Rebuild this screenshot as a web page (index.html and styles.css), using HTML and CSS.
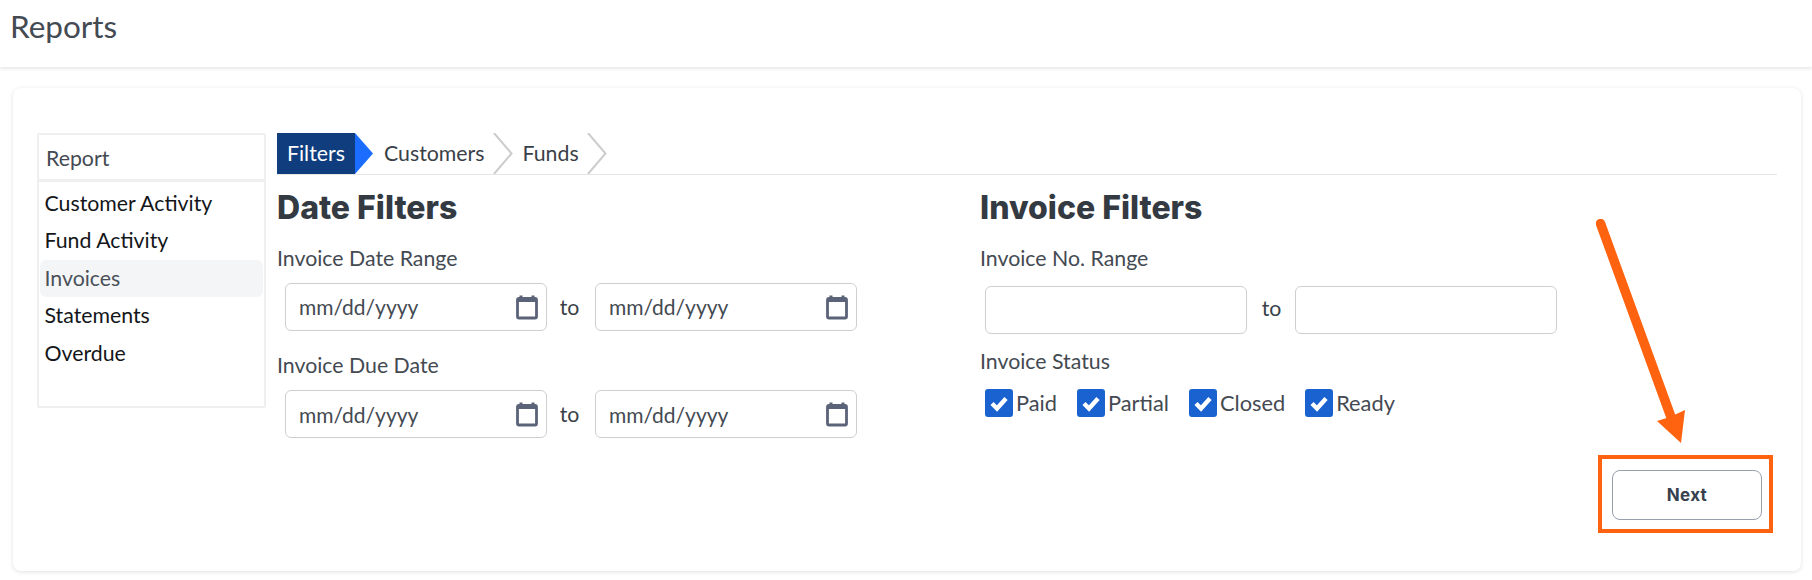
FILE: index.html
```html
<!DOCTYPE html>
<html lang="en">
<head>
<meta charset="utf-8">
<title>Reports</title>
<link rel="stylesheet" href="styles.css">
</head>
<body>
<header class="topbar"><h1 class="page-title">Reports</h1></header>
<main class="card">
  <aside class="sidebar">
    <div class="sidebar-head">Report</div>
    <ul class="report-list">
      <li class="report-item">Customer Activity</li>
      <li class="report-item">Fund Activity</li>
      <li class="report-item is-active">Invoices</li>
      <li class="report-item">Statements</li>
      <li class="report-item">Overdue</li>
    </ul>
  </aside>
  <section class="content">
    <nav class="steps">
      <div class="step step-current">Filters</div>
      <svg class="tip" width="19" height="41" viewBox="0 0 19 41"><path d="M0 0L18 20.500L0 41Z" fill="#1a6dff"/></svg>
      <div class="step step-customers">Customers</div>
      <svg class="chev" width="20" height="41" viewBox="0 0 20 41"><path d="M1 0L18.500 20.500L1 41" fill="none" stroke="#cccccc" stroke-width="2"/></svg>
      <div class="step step-funds">Funds</div>
      <svg class="chev" width="20" height="41" viewBox="0 0 20 41"><path d="M1 0L18.500 20.500L1 41" fill="none" stroke="#cccccc" stroke-width="2"/></svg>
    </nav>
    <div class="columns">
      <div class="col">
        <h2 class="col-title">Date Filters</h2>
        <div class="label label-first">Invoice Date Range</div>
        <div class="range">
          <div class="field date"><span>mm/dd/yyyy</span><svg class="cal" width="22" height="26" viewBox="0 0 22 26"><path d="M5 1.500V5M17 1.500V5" stroke="#5b6378" stroke-width="3" fill="none"/><rect x="1.500" y="4.500" width="19" height="19.500" rx="1.500" fill="none" stroke="#5b6378" stroke-width="2.800"/><rect x="1.500" y="4" width="19" height="4" fill="#5b6378"/></svg></div>
          <span class="to">to</span>
          <div class="field date"><span>mm/dd/yyyy</span><svg class="cal" width="22" height="26" viewBox="0 0 22 26"><path d="M5 1.500V5M17 1.500V5" stroke="#5b6378" stroke-width="3" fill="none"/><rect x="1.500" y="4.500" width="19" height="19.500" rx="1.500" fill="none" stroke="#5b6378" stroke-width="2.800"/><rect x="1.500" y="4" width="19" height="4" fill="#5b6378"/></svg></div>
        </div>
        <div class="label label-due">Invoice Due Date</div>
        <div class="range range-due">
          <div class="field date"><span>mm/dd/yyyy</span><svg class="cal" width="22" height="26" viewBox="0 0 22 26"><path d="M5 1.500V5M17 1.500V5" stroke="#5b6378" stroke-width="3" fill="none"/><rect x="1.500" y="4.500" width="19" height="19.500" rx="1.500" fill="none" stroke="#5b6378" stroke-width="2.800"/><rect x="1.500" y="4" width="19" height="4" fill="#5b6378"/></svg></div>
          <span class="to">to</span>
          <div class="field date"><span>mm/dd/yyyy</span><svg class="cal" width="22" height="26" viewBox="0 0 22 26"><path d="M5 1.500V5M17 1.500V5" stroke="#5b6378" stroke-width="3" fill="none"/><rect x="1.500" y="4.500" width="19" height="19.500" rx="1.500" fill="none" stroke="#5b6378" stroke-width="2.800"/><rect x="1.500" y="4" width="19" height="4" fill="#5b6378"/></svg></div>
        </div>
      </div>
      <div class="col col-right">
        <h2 class="col-title">Invoice Filters</h2>
        <div class="label label-first">Invoice No. Range</div>
        <div class="range range-no">
          <div class="field"></div>
          <span class="to to-no">to</span>
          <div class="field"></div>
        </div>
        <div class="label label-status">Invoice Status</div>
        <div class="checks">
          <label class="check"><svg class="box" width="28" height="28" viewBox="0 0 28 28"><rect width="28" height="28" rx="3" fill="#1a62cf"/><path d="M7 14.500L12 19.500L21 9.500" fill="none" stroke="#fff" stroke-width="4.400"/></svg>Paid</label>
          <label class="check"><svg class="box" width="28" height="28" viewBox="0 0 28 28"><rect width="28" height="28" rx="3" fill="#1a62cf"/><path d="M7 14.500L12 19.500L21 9.500" fill="none" stroke="#fff" stroke-width="4.400"/></svg>Partial</label>
          <label class="check"><svg class="box" width="28" height="28" viewBox="0 0 28 28"><rect width="28" height="28" rx="3" fill="#1a62cf"/><path d="M7 14.500L12 19.500L21 9.500" fill="none" stroke="#fff" stroke-width="4.400"/></svg>Closed</label>
          <label class="check"><svg class="box" width="28" height="28" viewBox="0 0 28 28"><rect width="28" height="28" rx="3" fill="#1a62cf"/><path d="M7 14.500L12 19.500L21 9.500" fill="none" stroke="#fff" stroke-width="4.400"/></svg>Ready</label>
        </div>
      </div>
    </div>
  </section>
  <div class="next-wrap"><button class="next" type="button">Next</button></div>
  <svg class="arrow" width="100" height="240" viewBox="0 0 100 240"><path d="M4.500 4.500L75 198" stroke="#ff630f" stroke-width="9.500" stroke-linecap="round" fill="none"/><path d="M85 224L61 202L74 198L89 191Z" fill="#ff630f"/></svg>
</main>
</body>
</html>
```

FILE: styles.css
```css
* { box-sizing: border-box; }
html, body { margin: 0; height: 100%; }
body {
  background: #fff;
  color: #3a3f48;
  font-family: "Lato", "Open Sans", sans-serif;
  font-size: 21.300px;
  overflow: hidden;
}
.topbar {
  height: 67px;
  padding: 7px 10px 0;
  background: #fff;
  box-shadow: 0 2px 3px rgba(30, 40, 60, 0.1);
}
.page-title { margin: 0; font-size: 31.500px; line-height: 38px; font-weight: 400; color: #444a52; }
.card {
  position: relative;
  display: flex;
  align-items: flex-start;
  width: 1788px;
  height: 483px;
  margin: 21px 0 0 13px;
  padding: 45px 23px 0 24px;
  background: #fff;
  border-radius: 8px;
  box-shadow: 0 1px 4px rgba(30, 40, 60, 0.14);
}
.sidebar {
  flex: none;
  width: 229px;
  height: 275px;
  border: 2px solid #efefef;
  border-radius: 2px;
}
.sidebar-head {
  height: 47px;
  padding: 10px 7px 0;
  line-height: 26px;
  color: #444a52;
  border-bottom: 3px solid #efefef;
}
.report-list { margin: 0; padding: 3px 1px 0; list-style: none; }
.report-item {
  height: 37.400px;
  padding: 0 4.500px;
  line-height: 37px;
  color: #14161a;
  border-radius: 6px;
}
.report-item.is-active { background: #f4f5f7; color: #4a5058; }
.content { flex: none; width: 1500px; margin-left: 11px; }
.steps {
  display: flex;
  align-items: center;
  height: 42px;
  border-bottom: 1px solid #e6e6e6;
}
.step { height: 41px; line-height: 41px; }
.step-current { width: 78px; padding-left: 10px; background: #0f3d7e; color: #fff; }
.tip { flex: none; }
.step-customers { margin-left: 10px; }
.chev { flex: none; margin-left: 9px; }
.step-funds { margin-left: 9px; }
.step-funds + .chev { margin-left: 8px; }
.columns { display: flex; }
.col { flex: none; width: 703px; }
.col-title { margin: 15px 0 0; font-family: "Inter", sans-serif; font-size: 32px; line-height: 36px; font-weight: 800; color: #343a42; }
.label { line-height: 26px; color: #444a52; }
.label-first { margin-top: 19px; }
.label-due { margin-top: 21px; }
.label-status { margin-top: 14px; }
.range { display: flex; align-items: center; margin: 11.500px 0 0 8px; }
.range-due { margin-top: 12.500px; }
.range-no { margin-top: 15px; margin-left: 5px; }
.field {
  display: flex;
  align-items: center;
  justify-content: space-between;
  width: 262px;
  height: 48px;
  padding: 0 8px 0 13px;
  border: 1px solid #cfcfcf;
  border-radius: 6px;
  color: #444a52;
  background: #fff;
  font-size: 21px;
}
.cal { flex: none; }
.to { width: 48px; padding-right: 3px; text-align: center; color: #3a3f48; }
.to-no { padding: 0 0 4px 1px; }
.checks { display: flex; margin: 14.500px 0 0 5px; }
.check { display: flex; align-items: center; gap: 3px; color: #444a52; margin-right: 20px; font-size: 21.800px; }
.box { flex: none; }
.next-wrap {
  position: absolute;
  left: 1585px;
  top: 367px;
  width: 175px;
  height: 78px;
  padding: 11px 10px;
  border: 4px solid #ff630f;
}
.next {
  display: block;
  width: 150px;
  height: 50px;
  background: #fff;
  border: 1px solid #9a9fae;
  border-radius: 8px;
  font: 700 17px "Inter", sans-serif;
  letter-spacing: 0.3px;
  color: #37404e;
}
.arrow { position: absolute; left: 1583px; top: 131px; }
```
